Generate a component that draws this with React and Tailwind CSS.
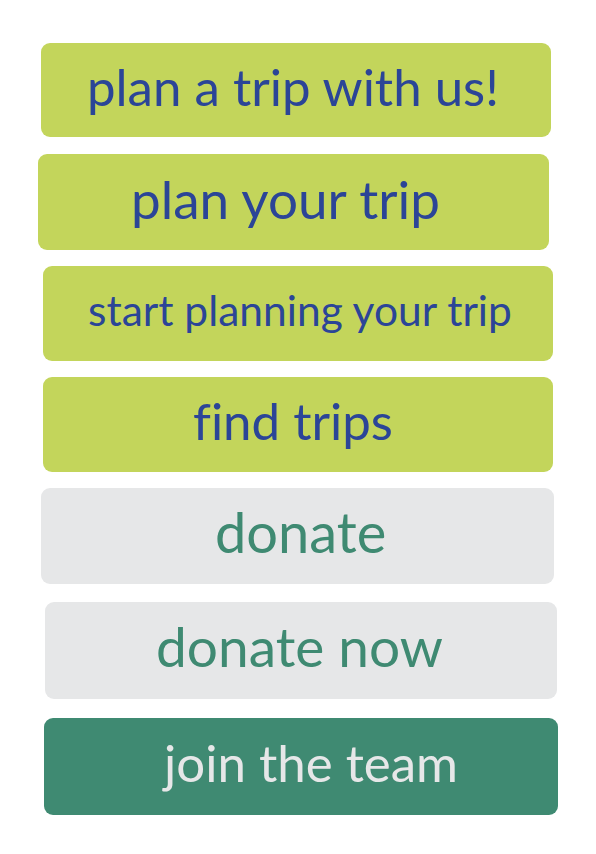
export default function App() {
  const font = { fontFamily: "Lato, 'Noto Sans', sans-serif" };
  return (
    <div className="w-[596px] h-[854px] bg-white pt-[43px] flex flex-col [font-variant-ligatures:none]" style={font}>
      <div className="ml-[41px] w-[510px] h-[94px] rounded-[9px] bg-[#c3d55b] flex items-center pl-[46px] pb-[8px]">
        <span className="text-[51px] leading-none text-[#2b4597]">plan a trip with us!</span>
      </div>
      <div className="mt-[17px] ml-[38px] w-[511px] h-[96px] rounded-[9px] bg-[#c3d55b] flex items-center pl-[93px] pb-[8px]">
        <span className="text-[53px] leading-none text-[#2b4597]">plan your trip</span>
      </div>
      <div className="mt-[16px] ml-[43px] w-[510px] h-[95px] rounded-[9px] bg-[#c3d55b] flex items-center pl-[45px] pb-[6px]">
        <span className="text-[42.5px] leading-none text-[#2b4597]">start planning your trip</span>
      </div>
      <div className="mt-[16px] ml-[43px] w-[510px] h-[95px] rounded-[9px] bg-[#c3d55b] flex items-center pl-[150px] pb-[8px]">
        <span className="text-[51px] leading-none text-[#2b4597]">find trips</span>
      </div>
      <div className="mt-[16px] ml-[41px] w-[513px] h-[96px] rounded-[9px] bg-[#e6e7e8] flex items-center pl-[174px] pb-[8px]">
        <span className="text-[56px] leading-none text-[#3f8a72]">donate</span>
      </div>
      <div className="mt-[18px] ml-[45px] w-[512px] h-[97px] rounded-[9px] bg-[#e6e7e8] flex items-center pl-[111px] pb-[8px]">
        <span className="text-[55px] leading-none text-[#3f8a72]">donate now</span>
      </div>
      <div className="mt-[19px] ml-[44px] w-[514px] h-[97px] rounded-[9px] bg-[#3f8a72] flex items-center pl-[120px] pb-[8px]">
        <span className="text-[51px] leading-none text-[#e6e7e8]">join the team</span>
      </div>
    </div>
  );
}
